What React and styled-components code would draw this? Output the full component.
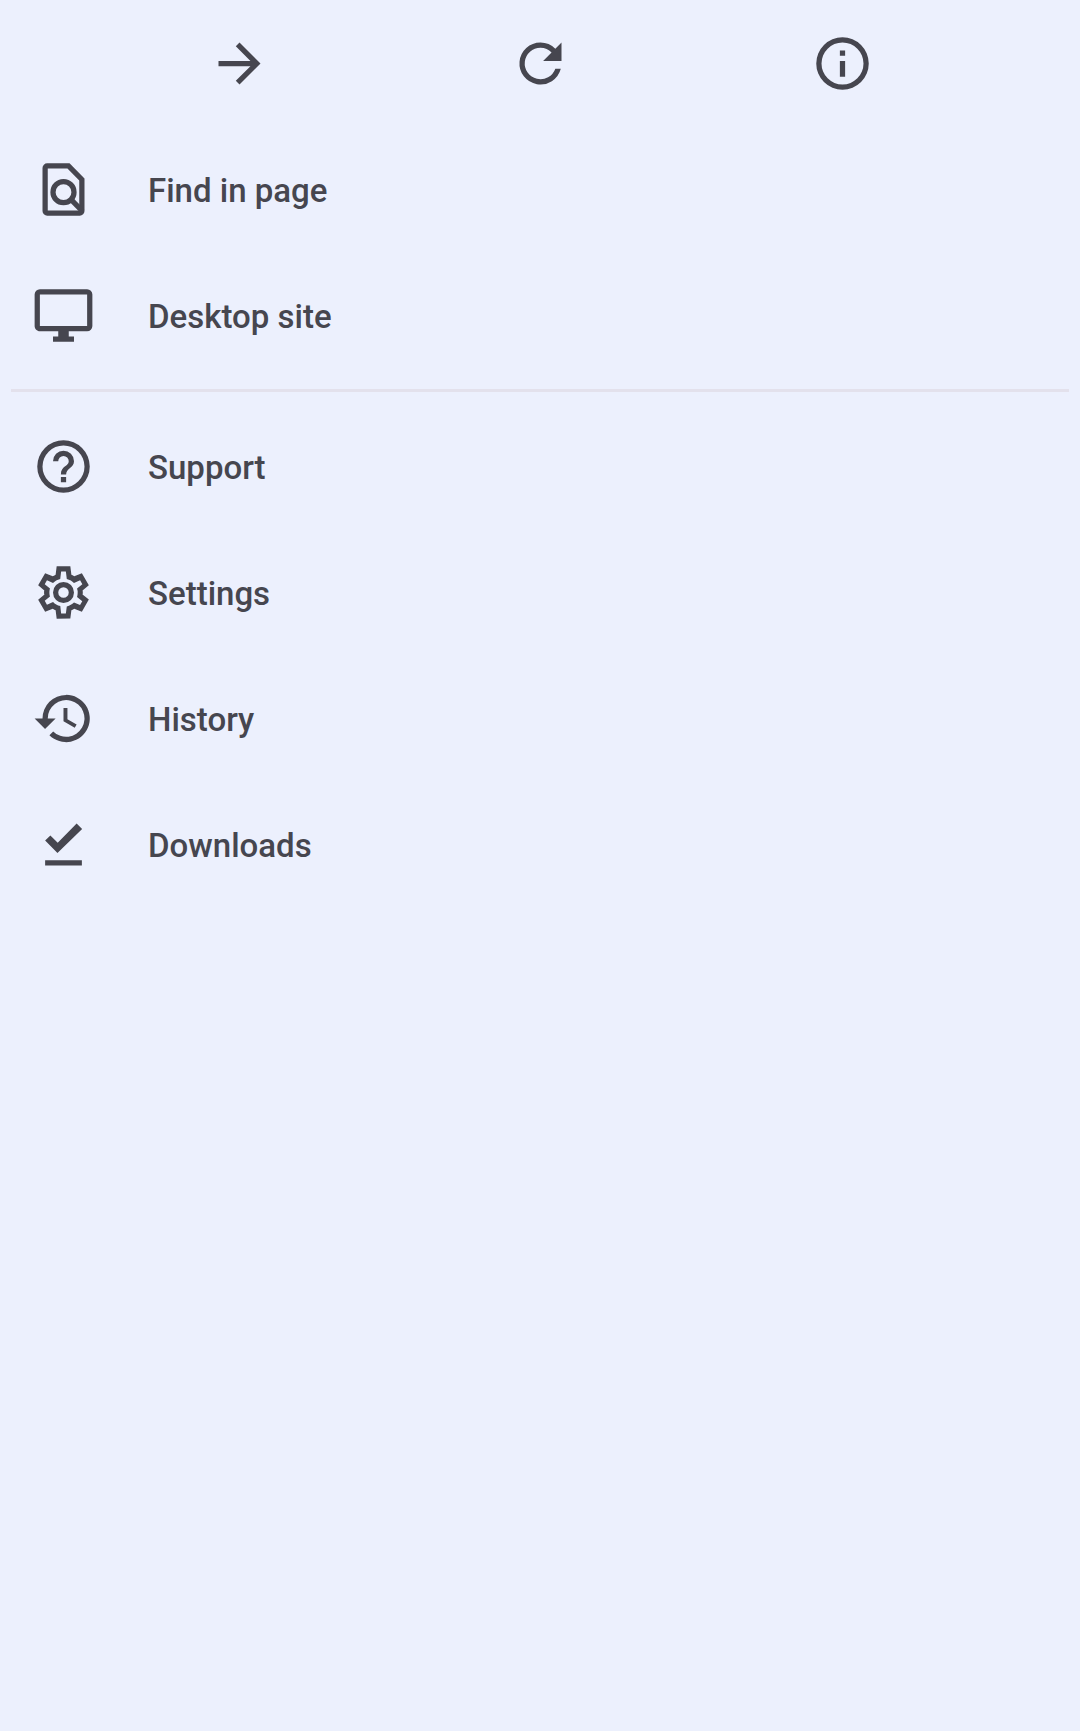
import React from "react";
import styled, { createGlobalStyle } from "styled-components";

const GlobalStyle = createGlobalStyle`
  *, *::before, *::after { box-sizing: border-box; }
  body {
    margin: 0;
    background: #ecf0fd;
    color: #46464f;
    font-family: Roboto, "Noto Sans", sans-serif;
  }
`;

const Menu = styled.nav`
  display: flex;
  flex-direction: column;
  min-height: 100vh;
`;

const ActionBar = styled.div`
  display: flex;
  height: 126px;
  padding: 0 87px 0 89px;
`;

const ActionButton = styled.button`
  flex: 1;
  display: flex;
  align-items: center;
  justify-content: center;
  padding: 0;
  border: 0;
  background: none;
  color: inherit;
  cursor: pointer;
`;

const List = styled.ul`
  margin: 0;
  padding: 0;
  list-style: none;
`;

const ItemButton = styled.button`
  display: flex;
  align-items: center;
  gap: 53px;
  width: 100%;
  height: 126px;
  padding: 0 32px;
  border: 0;
  background: none;
  color: inherit;
  font: 500 33px/40px Roboto, "Noto Sans", sans-serif;
  text-align: left;
  cursor: pointer;
`;

const ItemLabel = styled.span`
  padding-top: 3px;
`;

const Divider = styled.hr`
  align-self: stretch;
  height: 3px;
  margin: 11px;
  border: 0;
  background: #e3e1ec;
`;

const Icon = styled.svg.attrs({ viewBox: "0 0 24 24", "aria-hidden": true })`
  flex: none;
  width: 63px;
  height: 63px;
  fill: currentColor;
`;

const actions = [
  {
    label: "Forward",
    icon: <path d="M12 4l-1.41 1.41L16.17 11H4v2h12.17l-5.58 5.59L12 20l8-8z" />,
  },
  {
    label: "Refresh",
    icon: (
      <path d="M17.65 6.35A7.96 7.96 0 0 0 12 4a8 8 0 1 0 7.73 10h-2.08A6 6 0 1 1 12 6c1.66 0 3.14.69 4.22 1.78L13 11h7V4z" />
    ),
  },
  {
    label: "Page info",
    icon: (
      <path d="M11 7h2v2h-2zm0 4h2v6h-2zm1-9a10 10 0 1 0 0 20 10 10 0 0 0 0-20zm0 18a8 8 0 1 1 0-16 8 8 0 0 1 0 16z" />
    ),
  },
];

const pageItems = [
  {
    label: "Find in page",
    icon: (
      <>
        <path
          fillRule="evenodd"
          d="M5.8 2h8.5L20 7.8v12.4a1.8 1.8 0 0 1-1.8 1.8H5.8A1.8 1.8 0 0 1 4 20.2V3.8A1.8 1.8 0 0 1 5.8 2zM6 4v16h12V8.6L13.5 4z"
        />
        <g fill="none" stroke="currentColor" strokeWidth="2">
          <circle cx="12" cy="13" r="4" />
          <path d="M14.8 15.8l4.4 4.4" />
        </g>
      </>
    ),
  },
  {
    label: "Desktop site",
    icon: (
      <path d="M21 2H3a2 2 0 0 0-2 2v12c0 1.1.9 2 2 2h7v2H8v2h8v-2h-2v-2h7a2 2 0 0 0 2-2V4a2 2 0 0 0-2-2zm0 14H3V4h18z" />
    ),
  },
];

const appItems = [
  {
    label: "Support",
    icon: (
      <path d="M11 18h2v-2h-2zm1-16a10 10 0 1 0 0 20 10 10 0 0 0 0-20zm0 18a8 8 0 1 1 0-16 8 8 0 0 1 0 16zm0-14a4 4 0 0 0-4 4h2a2 2 0 1 1 4 0c0 2-3 1.75-3 5h2c0-2.25 3-2.5 3-5a4 4 0 0 0-4-4z" />
    ),
  },
  {
    label: "Settings",
    icon: (
      <>
        <path
          fillRule="evenodd"
          d="m9.4 22l-.4-3.2q-.4-.15-1.1-.6L5 19.375l-2.65-4.65l2.4-1.95Q4.6 12.5 4.6 12.338v-.675q0-.163.1-.4L2.35 9.275l2.65-4.65l2.9 1.2q.7-.45 1.1-.625l.4-3.2h5.2l.4 3.2q.4.15 1.1.6l2.9-1.175l2.65 4.65l-2.4 1.95q.1.3.1.45v.65q0 .163-.1.4l2.4 1.95l-2.65 4.65l-2.9-1.175q-.7.45-1.1.6l-.4 3.2zM11.1 20h1.8l.35-2.7q.875-.2 1.538-.587t1.212-.938l2.3 1.025l.85-1.5l-2-1.6q.125-.35.175-.737T17.4 12t-.05-.787t-.175-.738l2-1.6l-.85-1.5l-2.325 1.05q-.55-.575-1.212-.962t-1.538-.588L12.9 4h-1.8l-.35 2.85q-.875.2-1.537.588t-1.213.937L5.7 7.35l-.85 1.5l2 1.6q-.125.375-.175.75t-.05.8q0 .4.05.775t.175.75l-2 1.6l.85 1.5l2.325-1.05q.55.575 1.213.963t1.537.587z"
        />
        <circle cx="12" cy="12" r="3" fill="none" stroke="currentColor" strokeWidth="2" />
      </>
    ),
  },
  {
    label: "History",
    icon: (
      <path d="M13 3a9 9 0 0 0-9 9H1l3.89 3.89.07.14L9 12H6a7 7 0 1 1 2.06 4.94l-1.42 1.42A9 9 0 1 0 13 3zm-1 5v5l4.28 2.54.72-1.21-3.5-2.08V8z" />
    ),
  },
  {
    label: "Downloads",
    icon: <path d="M5 10.5l2-1.9 2.8 2.7L17 4l2.1 2.1-9.4 9.1zM5 18h14v2H5z" />,
  },
];

function MenuList({ items }) {
  return (
    <List>
      {items.map(({ label, icon }) => (
        <li key={label}>
          <ItemButton type="button">
            <Icon>{icon}</Icon>
            <ItemLabel>{label}</ItemLabel>
          </ItemButton>
        </li>
      ))}
    </List>
  );
}

export default function App() {
  return (
    <>
      <GlobalStyle />
      <Menu aria-label="Browser menu">
        <ActionBar>
          {actions.map(({ label, icon }) => (
            <ActionButton key={label} type="button" aria-label={label}>
              <Icon>{icon}</Icon>
            </ActionButton>
          ))}
        </ActionBar>
        <MenuList items={pageItems} />
        <Divider />
        <MenuList items={appItems} />
      </Menu>
    </>
  );
}
